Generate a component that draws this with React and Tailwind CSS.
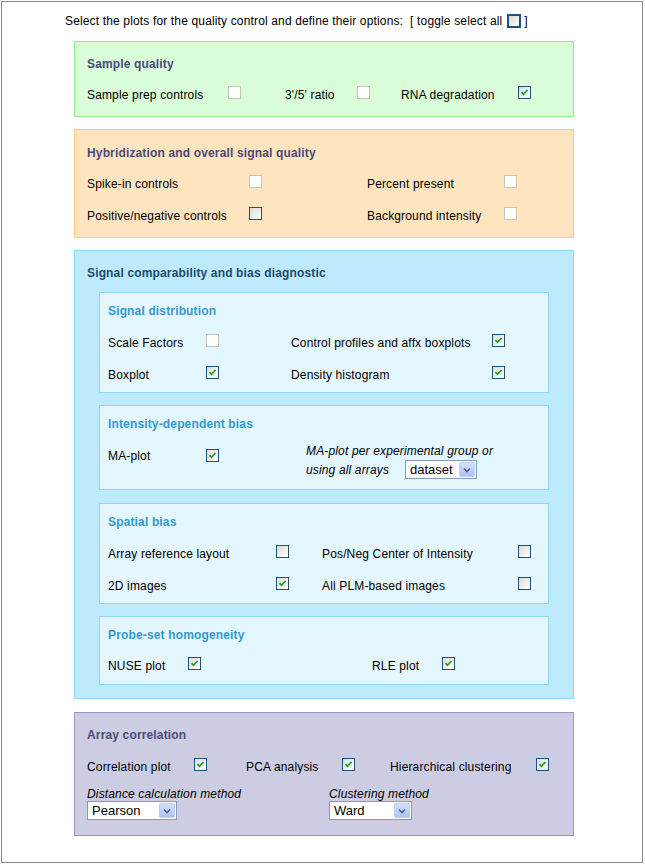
import React from "react";

const font = { fontFamily: '"Liberation Sans", Arial, sans-serif' };

function Check({ checked, gray }) {
  if (gray) {
    return <span className="inline-block w-[13px] h-[13px] shrink-0 border border-[#c6c3bc] bg-white mb-[4px]" />;
  }
  return (
    <span className="inline-flex items-center justify-center w-[13px] h-[13px] shrink-0 border border-[#1c5180] bg-gradient-to-br from-[#dcdcd7] to-white mb-[4px]">
      {checked && (
        <svg width="9" height="9" viewBox="0 0 9 9">
          <path d="M1.5 4.2 L3.5 6.3 L7.5 2" stroke="#21a121" strokeWidth="1.8" fill="none" />
        </svg>
      )}
    </span>
  );
}

function Select({ value, w }) {
  return (
    <span className={`inline-flex items-center h-[19px] ${w} border border-[#7f9db9] bg-white align-middle not-italic`}>
      <span className="flex-1 pl-[4px] text-[13px] leading-none text-black tracking-normal">{value}</span>
      <span className="flex items-center justify-center w-[16px] h-[15px] mr-[1px] rounded-[2px] border border-[#b9cdf7] bg-gradient-to-b from-[#d2e0fd] to-[#adc3f5]">
        <svg width="8" height="6" viewBox="0 0 8 6">
          <path d="M1 1.5 L4 4.5 L7 1.5" stroke="#4d6185" strokeWidth="1.6" fill="none" />
        </svg>
      </span>
    </span>
  );
}

// each cell: label width, label, checkbox state, spacer after the box
function Row({ cells, h = "h-[32px]" }) {
  return (
    <div className={`flex items-center ${h}`}>
      {cells.map((c, i) => (
        <React.Fragment key={i}>
          <span className="shrink-0 pt-[2px]" style={{ width: c.w }}>{c.label}</span>
          <Check checked={c.checked} gray={c.gray} />
          {c.after ? <span className="shrink-0" style={{ width: c.after }} /> : null}
        </React.Fragment>
      ))}
    </div>
  );
}

function Inner({ title, h, children }) {
  return (
    <div className={`w-[450px] ${h} border border-[#8fd6f5] bg-[#e4f6fe] pl-[8px] pt-[9px]`}>
      <div className="h-[16px] leading-[18px] font-bold text-[#3399cc]">{title}</div>
      {children}
    </div>
  );
}

export default function App() {
  return (
    <div className="bg-white min-h-[866px] pt-[1px] pl-[1px] text-[12px] text-black tracking-[0.15px]" style={font}>
      <div className="w-[642px] h-[862px] border border-[#8c8c8c]">
        <div className="flex items-center h-[14px] mt-[12px] ml-[63px]">
          <span>Select the plots for the quality control and define their options:</span>
          <span className="ml-[7px]">[ toggle select all</span>
          <span className="ml-[5px] inline-flex mb-[1px]">
            <span className="inline-block w-[14px] h-[14px] border-2 border-[#1c5180] bg-gradient-to-br from-[#d8d8d2] to-white" />
          </span>
          <span className="ml-[3px]">]</span>
        </div>

        {/* Sample quality */}
        <div className="ml-[72px] mt-[13px] w-[500px] h-[76px] border border-[#8fe98f] bg-[#d9fdd8] pl-[12px] pt-[13px]">
          <div className="h-[16px] leading-[18px] font-bold text-[#4a4a78]">Sample quality</div>
          <div className="mt-[7px]">
            <Row
              cells={[
                { w: 141, label: "Sample prep controls", gray: true, after: 44 },
                { w: 72, label: "3'/5' ratio", gray: true, after: 31 },
                { w: 117, label: "RNA degradation", checked: true },
              ]}
            />
          </div>
        </div>

        {/* Hybridization */}
        <div className="ml-[72px] mt-[12px] w-[500px] h-[109px] border border-[#fccb7e] bg-[#fee5c0] pl-[12px] pt-[14px]">
          <div className="h-[16px] leading-[18px] font-bold text-[#4a4a78]">Hybridization and overall signal quality</div>
          <div className="mt-[7px]">
            <Row
              cells={[
                { w: 162, label: "Spike-in controls", gray: true, after: 105 },
                { w: 137, label: "Percent present", gray: true },
              ]}
            />
            <Row
              cells={[
                { w: 162, label: "Positive/negative controls", after: 105 },
                { w: 137, label: "Background intensity", gray: true },
              ]}
            />
          </div>
        </div>

        {/* Signal comparability */}
        <div className="ml-[72px] mt-[12px] w-[500px] h-[449px] border border-[#8fd6f5] bg-[#bdeafd] pl-[24px] pt-[13px]">
          <div className="h-[16px] leading-[18px] font-bold text-[#1d4c6c] -ml-[12px]">Signal comparability and bias diagnostic</div>

          <div className="mt-[12px]">
            <Inner title="Signal distribution" h="h-[101px]">
              <div className="mt-[8px]">
                <Row
                  cells={[
                    { w: 98, label: "Scale Factors", gray: true, after: 72 },
                    { w: 201, label: "Control profiles and affx boxplots", checked: true },
                  ]}
                />
                <Row
                  cells={[
                    { w: 98, label: "Boxplot", checked: true, after: 72 },
                    { w: 201, label: "Density histogram", checked: true },
                  ]}
                />
              </div>
            </Inner>
          </div>

          <div className="mt-[12px]">
            <Inner title="Intensity-dependent bias" h="h-[85px]">
              <div className="flex items-start mt-[10px]">
                <span className="w-[98px] leading-[18px] mt-[6px]">MA-plot</span>
                <span className="mt-[6px]"><Check checked /></span>
                <div className="ml-[87px] italic leading-[18px] mt-[1px]">
                  <div>MA-plot per experimental group or</div>
                  <div className="flex items-center h-[19px]">
                    <span className="w-[99px]">using all arrays</span>
                    <Select value="dataset" w="w-[72px]" />
                  </div>
                </div>
              </div>
            </Inner>
          </div>

          <div className="mt-[13px]">
            <Inner title="Spatial bias" h="h-[101px]">
              <div className="mt-[8px]">
                <Row
                  cells={[
                    { w: 168, label: "Array reference layout", after: 33 },
                    { w: 196, label: "Pos/Neg Center of Intensity" },
                  ]}
                />
                <Row
                  cells={[
                    { w: 168, label: "2D images", checked: true, after: 33 },
                    { w: 196, label: "All PLM-based images" },
                  ]}
                />
              </div>
            </Inner>
          </div>

          <div className="mt-[12px]">
            <Inner title="Probe-set homogeneity" h="h-[69px]">
              <div className="mt-[7px]">
                <Row
                  cells={[
                    { w: 80, label: "NUSE plot", checked: true, after: 171 },
                    { w: 70, label: "RLE plot", checked: true },
                  ]}
                />
              </div>
            </Inner>
          </div>
        </div>

        {/* Array correlation */}
        <div className="ml-[72px] mt-[13px] w-[500px] h-[124px] border border-[#9c95c4] bg-[#cccde2] pl-[12px] pt-[13px]">
          <div className="h-[16px] leading-[18px] font-bold text-[#4a4a78]">Array correlation</div>
          <div className="mt-[8px]">
            <Row
              cells={[
                { w: 107, label: "Correlation plot", checked: true, after: 39 },
                { w: 96, label: "PCA analysis", checked: true, after: 35 },
                { w: 146, label: "Hierarchical clustering", checked: true },
              ]}
            />
          </div>
          <div className="flex italic h-[14px] leading-[16px] mt-[4px]">
            <span className="w-[242px]">Distance calculation method</span>
            <span>Clustering method</span>
          </div>
          <div className="flex mt-[1px]">
            <span className="w-[242px]"><Select value="Pearson" w="w-[90px]" /></span>
            <Select value="Ward" w="w-[83px]" />
          </div>
        </div>
      </div>
    </div>
  );
}
